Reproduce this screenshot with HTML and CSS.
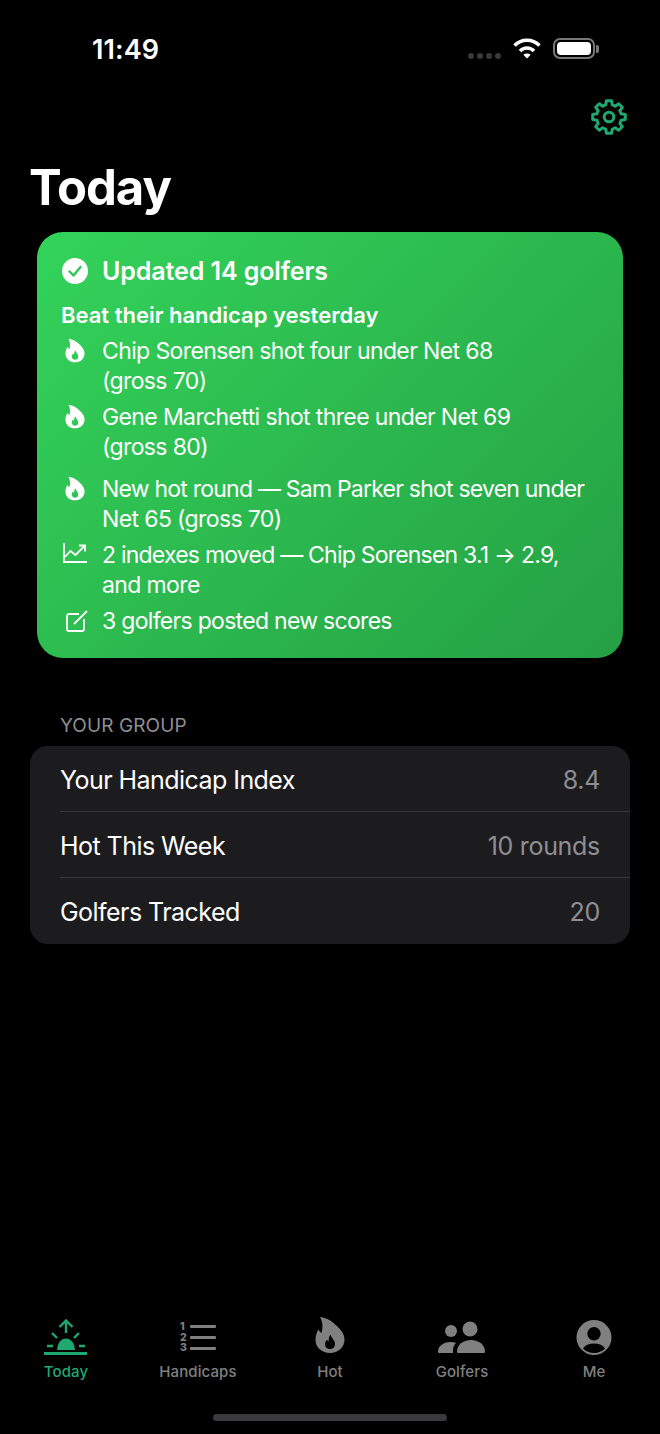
FILE: index.html
```html
<!DOCTYPE html>
<html lang="en">
<head>
<meta charset="UTF-8">
<meta name="viewport" content="width=device-width, initial-scale=1.0">
<title>Today</title>
<link rel="stylesheet" href="styles.css">
</head>
<body>

<svg class="defs" width="0" height="0">
  <symbol id="flame" viewBox="0 0 30 38">
    <path fill-rule="evenodd" d="M5 1C10 1.500 15 4 18.500 7C24.500 12 29.500 17 29.500 23.500C29.500 31.500 23 37 15 37C7 37 .5 31.500 .5 24C.5 20 1.500 16.500 3.500 13.500C4 15 5 16 6.500 17C8 12 8 6 5 1zM15.500 18.500c.5 3 4.500 5.500 4.500 9.500 0 3-2.200 5-5 5s-5-2-5-4.800c0-2 1-3.500 2.200-4.500.3 1 .8 1.500 1.500 1.800-.2-2.500.3-5 1.800-7z"/>
  </symbol>
</svg>

<div class="status-bar">
  <span class="time">11:49</span>
  <div class="status-icons">
    <div class="signal"><i></i><i></i><i></i><i></i></div>
    <svg class="wifi" width="30" height="22" viewBox="0 0 30 22" fill="none" stroke="#fff" stroke-width="3.600">
      <path d="M2.500 8.500C9.500 1.500 20.500 1.500 27.500 8.500"/>
      <path d="M8 14c4-4 10-4 14 0"/>
      <path d="M11.300 17.800c2.300-1.800 5.100-1.800 7.400 0L15 21.500z" fill="#fff" stroke="none"/>
    </svg>
    <div class="battery"><div class="battery-fill"></div></div>
    <div class="battery-cap"></div>
  </div>
</div>

<div class="nav-row">
  <svg width="36" height="36" viewBox="-18 -18 36 36" fill="none" stroke="#1fa971" stroke-width="3" stroke-linejoin="round">
    <path d="M-3.200-12.100L-2.600-16.300H2.600L3.200-12.100A12.500 12.500 0 0 1 6.250-10.800L9.700-13.300L13.300-9.700L10.800-6.250A12.500 12.500 0 0 1 12.100-3.200L16.300-2.600V2.600L12.100 3.200A12.500 12.500 0 0 1 10.800 6.250L13.300 9.700L9.700 13.300L6.250 10.800A12.500 12.500 0 0 1 3.200 12.100L2.600 16.300H-2.600L-3.200 12.100A12.500 12.500 0 0 1-6.250 10.800L-9.700 13.300L-13.300 9.700L-10.800 6.250A12.500 12.500 0 0 1-12.100 3.200L-16.300 2.600V-2.600L-12.100-3.200A12.500 12.500 0 0 1-10.800-6.250L-13.300-9.700L-9.700-13.300L-6.250-10.800A12.500 12.500 0 0 1-3.200-12.100z"/>
    <circle r="4.800"/>
  </svg>
</div>

<h1 class="page-title">Today</h1>

<section class="summary-card">
  <div class="summary-head">
    <svg class="item-icon" width="26" height="26" viewBox="0 0 26 26">
      <circle cx="13" cy="13" r="13" fill="#fff"/>
      <path d="M7.500 13.500l4 4 7-8.500" fill="none" stroke="#2fc458" stroke-width="2.400" stroke-linecap="round" stroke-linejoin="round"/>
    </svg>
    <span>Updated 14 golfers</span>
  </div>
  <div class="summary-sub">Beat their handicap yesterday</div>
  <ul class="summary-list">
    <li>
      <svg class="item-icon flame-icon" width="20" height="25" fill="#fff"><use href="#flame"/></svg>
      <span>Chip Sorensen shot four under Net 68<br>(gross 70)</span>
    </li>
    <li>
      <svg class="item-icon flame-icon" width="20" height="25" fill="#fff"><use href="#flame"/></svg>
      <span>Gene Marchetti shot three under Net 69<br>(gross 80)</span>
    </li>
    <li class="gap-more">
      <svg class="item-icon flame-icon" width="20" height="25" fill="#fff"><use href="#flame"/></svg>
      <span><span class="tight">New hot round — Sam Parker shot seven under</span><br>Net 65 (gross 70)</span>
    </li>
    <li>
      <svg class="item-icon chart-icon" width="24" height="20" viewBox="0 0 24 20" fill="none" stroke="#fff" stroke-width="1.800">
        <path d="M1 0v19h23"/>
        <path d="M2 14l5.500-6 5 4L21 3.500"/>
        <path d="M16 2.500h6v6"/>
      </svg>
      <span><span class="tight">2 indexes moved — Chip Sorensen 3.1 → 2.9,</span><br>and more</span>
    </li>
    <li>
      <svg class="item-icon note-icon" width="22" height="22" viewBox="0 0 22 22" fill="none" stroke="#fff" stroke-width="1.800">
        <path d="M13 4H3a2 2 0 0 0-2 2v13a2 2 0 0 0 2 2h13a2 2 0 0 0 2-2V9"/>
        <path d="M8 14L21 1"/>
      </svg>
      <span class="scores-line">3 golfers posted new scores</span>
    </li>
  </ul>
</section>

<div class="group-label">YOUR GROUP</div>
<div class="group-list">
  <div class="group-row"><span>Your Handicap Index</span><span class="group-value">8.4</span></div>
  <div class="group-row"><span>Hot This Week</span><span class="group-value">10 rounds</span></div>
  <div class="group-row"><span>Golfers Tracked</span><span class="group-value">20</span></div>
</div>

<div class="tab-bar">
  <div class="tab active">
    <svg width="44" height="38" viewBox="0 0 44 38" fill="none" stroke="#1fa971" stroke-width="2.400">
      <path d="M22 14V2M15.500 8L22 1.500 28.500 8"/>
      <path d="M8 14l5 5M35 14l-5 5M3 27h6M35 27h6"/>
      <path d="M13 31a9 11.500 0 0 1 18 0z" fill="#1fa971" stroke="none"/>
      <path d="M0 34.500h43" stroke-width="3"/>
    </svg>
    <span>Today</span>
  </div>
  <div class="tab">
    <div class="rank-icon">
      <div class="rank-digits">1<br>2<br>3</div>
      <div class="rank-bars"><i></i><i></i><i></i></div>
    </div>
    <span>Handicaps</span>
  </div>
  <div class="tab">
    <svg class="tab-flame" width="30" height="38" viewBox="0 3 30 38" fill="#808080"><use href="#flame" width="30" height="38"/></svg>
    <span>Hot</span>
  </div>
  <div class="tab">
    <svg width="48" height="38" viewBox="0 0 48 38" fill="#808080">
      <circle cx="13" cy="12" r="6"/>
      <circle cx="32" cy="10" r="7.500"/>
      <path d="M1.500 34C.5 34 0 33.500 0 32.500C0 27.500 5 23 12.500 23C14.500 23 16 23.300 18 24C15.500 26.500 14.500 29.500 15 34z"/>
      <path d="M19 32.500C19 26 25 21 33 21C41 21 47 26 47 32.500C47 33.500 46.500 34 45.500 34H20.500C19.500 34 19 33.500 19 32.500z"/>
    </svg>
    <span>Golfers</span>
  </div>
  <div class="tab">
    <svg width="36" height="38" viewBox="0 0 36 38" fill="#808080">
      <path fill-rule="evenodd" d="M18 1a17.500 17.500 0 1 1 0 35 17.500 17.500 0 0 1 0-35zM18 8a6.700 6.700 0 1 0 0 13.400A6.700 6.700 0 0 0 18 8zM18 24.500c-5 0-9 1.700-11 5 2.800 2.800 6.800 4.500 11 4.500s8.200-1.700 11-4.500c-2-3.300-6-5-11-5z"/>
    </svg>
    <span>Me</span>
  </div>
</div>

<div class="home-bar"></div>

</body>
</html>
```

FILE: styles.css
```css
* {
    box-sizing: border-box;
}
body {
    font-family: Inter, "Liberation Sans", sans-serif;
    background-color: #000;
    color: #fff;
    margin: 0;
    padding: 0;
    width: 660px;
    height: 1434px;
    overflow: hidden;
    display: flex;
    flex-direction: column;
}
.defs {
    position: absolute;
}
.status-bar {
    height: 96px;
    padding: 33px 61px 0 92px;
    display: flex;
    justify-content: space-between;
    align-items: flex-start;
}
.time {
    font-size: 27px;
    font-weight: 600;
    line-height: 34px;
    letter-spacing: 0.1px;
}
.status-icons {
    display: flex;
    align-items: flex-start;
    padding-top: 5px;
}
.signal {
    display: flex;
    gap: 3px;
    margin: 15px 11px 0 0;
}
.signal i {
    width: 6px;
    height: 6px;
    border-radius: 50%;
    background-color: #3a3a3c;
}
.wifi {
    margin: -1px 11px 0 0;
}
.battery {
    width: 42px;
    height: 21px;
    border: 2px solid #77777a;
    border-radius: 7px;
    padding: 2px;
}
.battery-fill {
    height: 100%;
    background-color: #fff;
    border-radius: 4px;
}
.battery-cap {
    width: 3px;
    height: 8px;
    margin: 7px 0 0 1px;
    background-color: #77777a;
    border-radius: 0 2px 2px 0;
}
.nav-row {
    height: 44px;
    padding-right: 33px;
    margin-top: 3px;
    display: flex;
    justify-content: flex-end;
}
.page-title {
    margin: 16px 0 0;
    padding-left: 29px;
    font-size: 49px;
    line-height: 57px;
    font-weight: 700;
    letter-spacing: -1px;
}
.summary-card {
    margin: 16px 37px 0;
    height: 426px;
    padding: 24px 23px 0;
    border-radius: 26px;
    background: linear-gradient(135deg, #33d35a, #25a044);
}
.summary-head {
    display: flex;
    align-items: center;
    gap: 14px;
    font-size: 25px;
    line-height: 30px;
    font-weight: 600;
    letter-spacing: -0.1px;
    padding-left: 2px;
}
.summary-sub {
    margin-top: 15px;
    padding-left: 1px;
    font-size: 22px;
    line-height: 28px;
    font-weight: 600;
}
.summary-list {
    list-style: none;
    margin: 7px 0 0;
    padding: 0;
    font-size: 23px;
    line-height: 30px;
    letter-spacing: -0.62px;
}
.summary-list li {
    display: flex;
    margin-bottom: 6px;
    position: relative;
    padding-left: 42px;
}
.summary-list li.gap-more {
    margin-top: 12px;
}
.tight {
    letter-spacing: -0.78px;
}
.scores-line {
    letter-spacing: -0.7px;
}
.item-icon {
    flex: none;
}
.summary-list .item-icon {
    position: absolute;
}
.summary-list .flame-icon {
    left: 5px;
    top: 2px;
}
.summary-list .chart-icon {
    left: 3px;
    top: 3px;
}
.summary-list .note-icon {
    left: 6px;
    top: 4px;
}
.group-label {
    margin-top: 56px;
    padding-left: 60px;
    font-size: 19px;
    line-height: 24px;
    letter-spacing: 0.1px;
    color: #8e8e93;
}
.group-list {
    margin: 8px 30px 0;
    background-color: #1c1c1e;
    border-radius: 18px;
    overflow: hidden;
}
.group-row {
    height: 66px;
    margin-left: 30px;
    padding: 2px 30px 0 0;
    display: flex;
    justify-content: space-between;
    align-items: center;
    font-size: 25px;
    letter-spacing: -0.55px;
    border-bottom: 1px solid #38383a;
}
.group-row:last-child {
    border-bottom: none;
}
.group-value {
    color: #8e8e93;
    letter-spacing: -0.3px;
}
.tab-bar {
    margin-top: auto;
    display: flex;
}
.tab {
    width: 132px;
    display: flex;
    flex-direction: column;
    align-items: center;
    gap: 5px;
    color: #808080;
    font-size: 15px;
    line-height: 20px;
    font-weight: 500;
    letter-spacing: 0.1px;
}
.tab.active {
    color: #1fa971;
}
.tab-flame {
    overflow: visible;
}
.rank-icon {
    width: 36px;
    height: 38px;
    display: flex;
}
.rank-digits {
    width: 10px;
    padding-top: 3px;
    font-size: 10.5px;
    line-height: 10.5px;
    font-weight: 800;
    color: #808080;
}
.rank-bars {
    flex: 1;
    display: flex;
    flex-direction: column;
    gap: 8px;
    padding-top: 6px;
}
.rank-bars i {
    display: block;
    height: 3px;
    background-color: #808080;
    border-radius: 1px;
}
.home-bar {
    width: 234px;
    height: 7px;
    margin: 32px auto 13px;
    background-color: #3a3a3c;
    border-radius: 4px;
}
```
